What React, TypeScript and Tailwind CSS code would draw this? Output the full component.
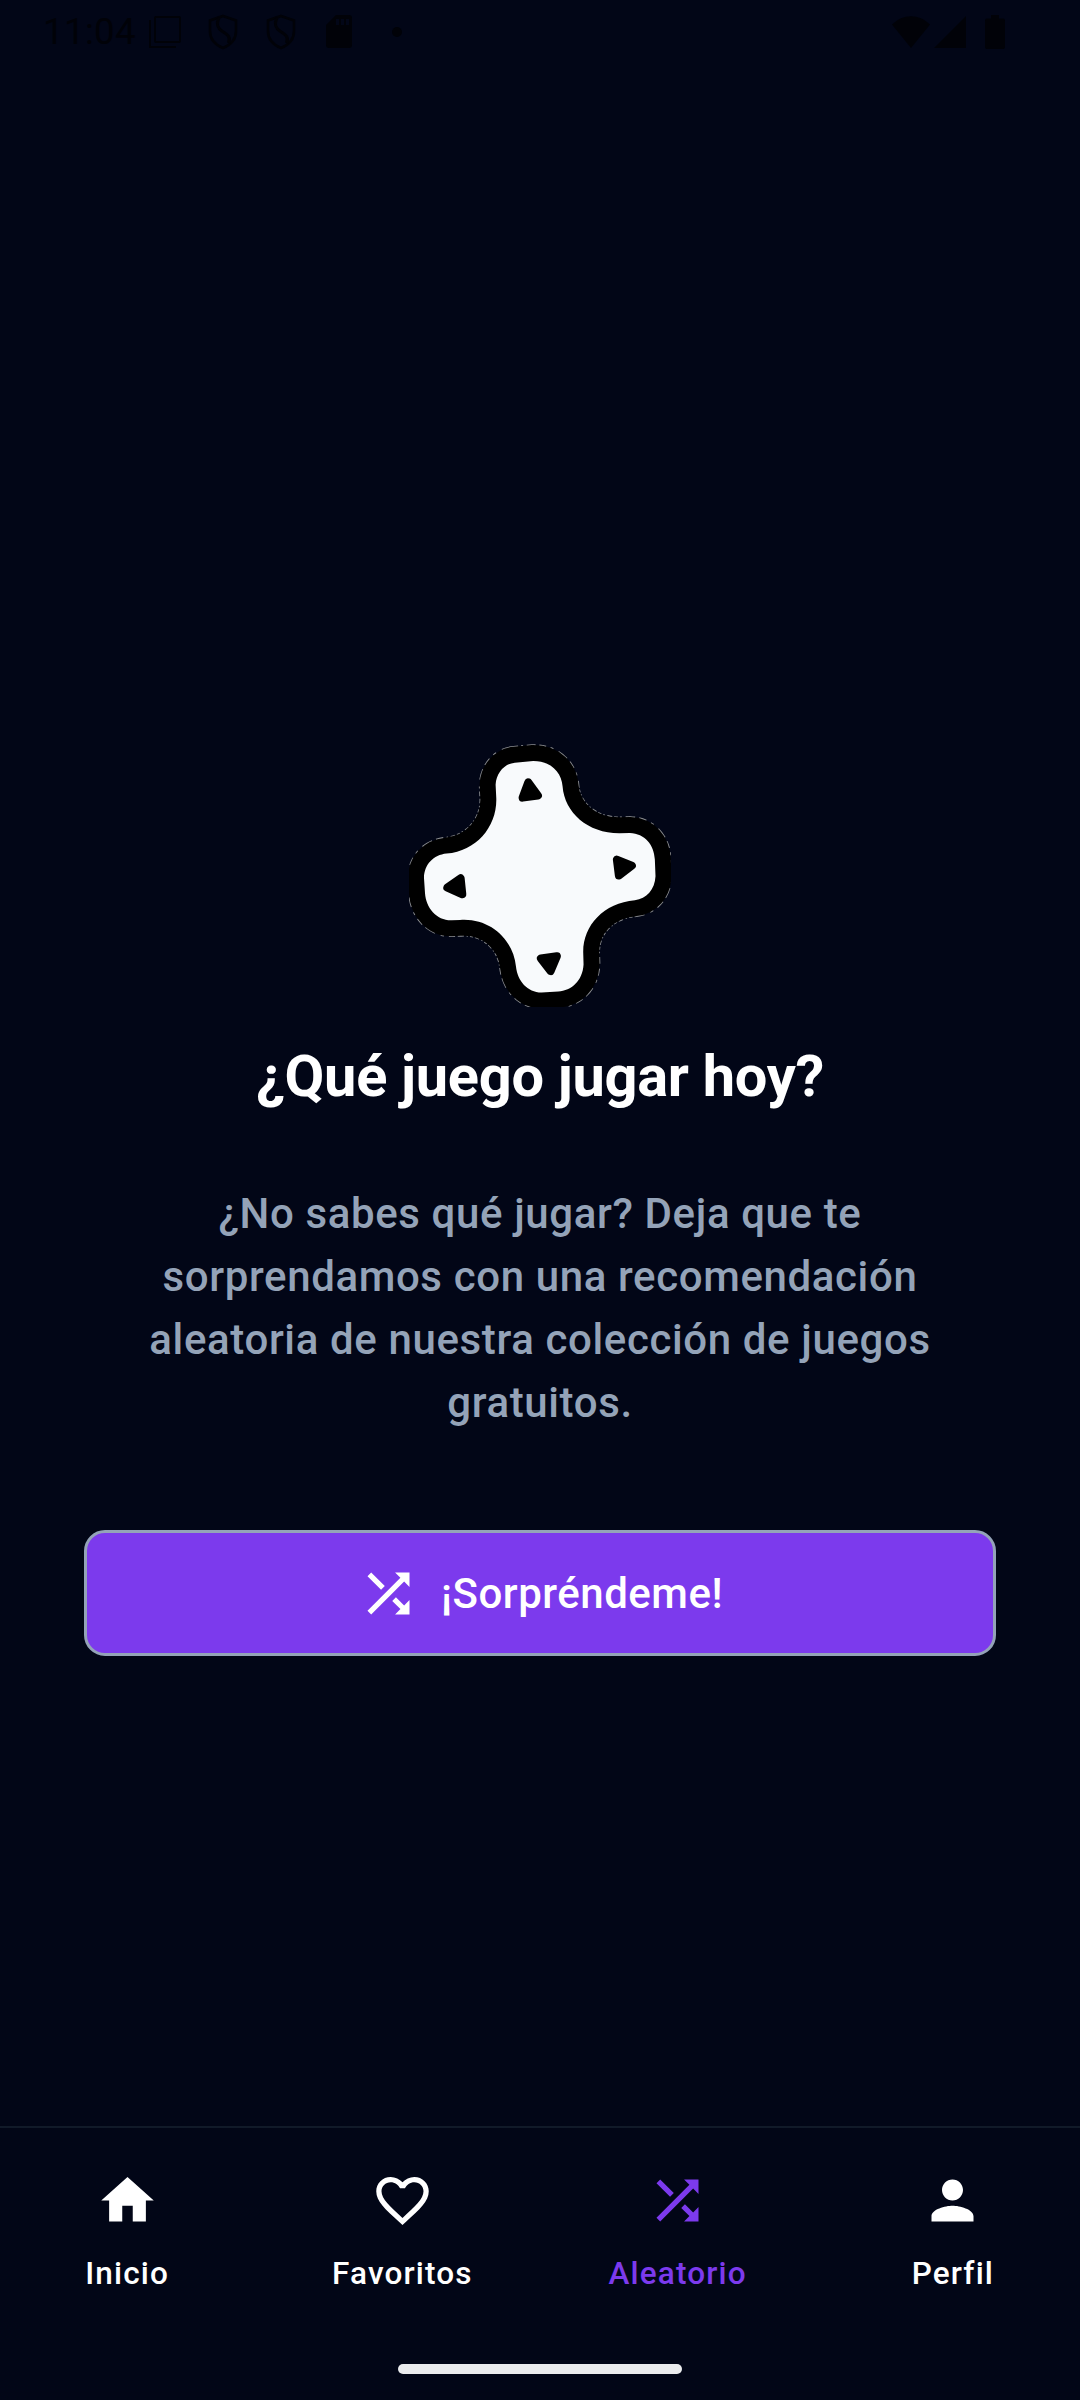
import type { ReactNode } from "react";

const HOME = "M10 20v-6h4v6h5v-8h3L12 3 2 12h3v8z";
const HEART =
  "M16.5 3c-1.74 0-3.41.81-4.5 2.09C10.91 3.81 9.24 3 7.5 3 4.42 3 2 5.42 2 8.5c0 3.78 3.4 6.86 8.55 11.54L12 21.35l1.45-1.32C18.6 15.36 22 12.28 22 8.5 22 5.42 19.58 3 16.5 3zm-4.4 15.55l-.1.1-.1-.1C7.14 14.24 4 11.39 4 8.5 4 6.5 5.5 5 7.5 5c1.54 0 3.04.99 3.57 2.36h1.87C13.46 5.99 14.96 5 16.5 5c2 0 3.5 1.5 3.5 3.5 0 2.89-3.14 5.74-7.9 10.05z";
const SHUFFLE =
  "M10.59 9.17L5.41 4 4 5.41l5.17 5.17 1.42-1.41zM14.5 4l2.04 2.04L4 18.59 5.41 20 17.96 7.46 20 9.5V4h-5.5zm.33 9.41l-1.41 1.41 3.13 3.13L14.5 20H20v-5.5l-2.04 2.04-3.13-3.13z";
const PERSON =
  "M12 12c2.21 0 4-1.79 4-4s-1.79-4-4-4-4 1.79-4 4 1.79 4 4 4zm0 2c-2.67 0-8 1.34-8 4v2h16v-2c0-2.66-5.33-4-8-4z";

const PAD =
  "M375 99 L430 94 C485 94 515 130 518 170 C524 250 595 312 690 311 L720 310 C765 312 793 345 795 390 L797 440 C795 480 770 508 735 512 C640 520 578 590 580 670 L581 705 C578 755 545 783 505 786 L455 789 C412 788 383 755 378 710 C370 630 300 564 210 571 L185 572 C140 573 108 535 105 490 L102 445 C103 405 130 376 170 372 C260 364 322 290 319 205 L317 165 C319 130 343 102 375 99 Z";

function Icon({ d }: { d: string }) {
  return (
    <svg viewBox="0 0 24 24" className="size-[63px] shrink-0 fill-current">
      <path d={d} />
    </svg>
  );
}

function Shield() {
  return (
    <svg viewBox="0 0 30 36" className="h-[36px] w-[30px]" fill="none" stroke="currentColor" strokeWidth="2.6">
      <path d="M15 2 L28 6.5 V17 C28 25 22.5 31 15 34 C7.5 31 2 25 2 17 V6.5 Z" />
      <path d="M11 3.5 C7.500 11 10 14.500 14.5 17.500 C20 21 23 23 20.500 29" strokeWidth="3.2" />
    </svg>
  );
}

function StatusBar() {
  return (
    <header className="flex h-[63px] items-center text-[#010208]">
      <span className="ml-[43px] w-[93px] whitespace-nowrap text-[36.75px] leading-[42px] tracking-[0.3px]">11:04</span>
      <svg viewBox="0 0 32 34" className="ml-[13px] h-[34px] w-[32px]" fill="none" stroke="currentColor" strokeWidth="2">
        <rect x="6" y="2" width="25" height="25" rx="1" />
        <path d="M1 5V32H27" />
      </svg>
      <div className="ml-[27px]"><Shield /></div>
      <div className="ml-[28px]"><Shield /></div>
      <svg viewBox="0 0 26 33" className="ml-[30px] h-[33px] w-[26px] fill-current">
        <path fillRule="evenodd" d="M10 0H23a3 3 0 0 1 3 3V30a3 3 0 0 1-3 3H3a3 3 0 0 1-3-3V10ZM10 4v6h3V4ZM15 4v6h3V4ZM20 4v6h3V4Z" />
      </svg>
      <span className="ml-[40px] size-[10px] rounded-full bg-current" />
      <svg viewBox="0 0 38 32" className="ml-auto h-[32px] w-[38px] fill-current">
        <path d="M0 8.5C11-2.6 27-2.6 38 8.5L19 32Z" />
      </svg>
      <svg viewBox="0 0 32 32" className="ml-[4px] h-[32px] w-[32px] fill-current">
        <path d="M32 0V32H0Z" />
      </svg>
      <svg viewBox="0 0 20 34" className="mr-[75px] ml-[19px] h-[34px] w-[20px] fill-current">
        <path d="M6 0H14V3.5H18a2 2 0 0 1 2 2V32a2 2 0 0 1-2 2H2a2 2 0 0 1-2-2V5.500a2 2 0 0 1 2-2H6Z" />
      </svg>
    </header>
  );
}

function GamePad() {
  return (
    <svg viewBox="57 43 788 788" className="size-[262.5px]">
      <g strokeLinejoin="round">
        <path d={PAD} fill="none" stroke="#8b8d91" strokeWidth="101" strokeDasharray="14 9 6 11 20 8" />
        <path d={PAD} fill="#f8fafc" stroke="#000" strokeWidth="96" />
        <path d={PAD} fill="#f8fafc" />
      </g>
      <g fill="#000" stroke="#000" strokeWidth="24" strokeLinejoin="round">
        <path d="M415 158L444 198L398 204Z" />
        <path d="M726 408L681 390L687 438Z" />
        <path d="M172 474L212 446L217 494Z" />
        <path d="M482 725L453 687L501 680Z" />
      </g>
    </svg>
  );
}

function Tab({ icon, label, active }: { icon: ReactNode; label: string; active?: boolean }) {
  return (
    <button className={active ? "flex flex-1 flex-col items-center text-[#7c3aed]" : "flex flex-1 flex-col items-center text-white"}>
      {icon}
      <span className="mt-[21px] text-[31.5px] leading-[42px] font-medium tracking-[1.15px]">{label}</span>
    </button>
  );
}

export default function App() {
  return (
    <div className="flex h-[2400px] w-[1080px] flex-col overflow-hidden bg-[#020617] font-['Roboto',sans-serif]">
      <StatusBar />
      <main className="flex flex-1 flex-col items-center px-[84px] pt-[681px]">
        <GamePad />
        <h1 className="mt-[32.5px] text-[57.75px] leading-[74px] font-bold tracking-[-0.3px] whitespace-nowrap text-white">¿Qué juego jugar hoy?</h1>
        <p className="mt-[69px] text-center text-[42px] leading-[63px] font-medium tracking-[0.62px] text-[#94a3b8]">
          ¿No sabes qué jugar? Deja que te
          <br />
          sorprendamos con una recomendación
          <br />
          aleatoria de nuestra colección de juegos
          <br />
          gratuitos.
        </p>
        <button className="mt-[96px] flex h-[126px] w-full items-center justify-center gap-[21px] rounded-[21px] border-[3px] border-[#94a3b8] bg-[#7c3aed] text-[42px] leading-[63px] font-medium tracking-[0.5px] text-white">
          <Icon d={SHUFFLE} />
          <span>¡Sorpréndeme!</span>
        </button>
      </main>
      <nav className="flex h-[274px] flex-col items-center border-t-2 border-[#111a29]">
        <div className="flex w-full gap-[21px] pt-[41px]">
          <Tab icon={<Icon d={HOME} />} label="Inicio" />
          <Tab icon={<Icon d={HEART} />} label="Favoritos" />
          <Tab icon={<Icon d={SHUFFLE} />} label="Aleatorio" active />
          <Tab icon={<Icon d={PERSON} />} label="Perfil" />
        </div>
        <div className="mt-auto mb-[26px] h-[10px] w-[284px] rounded-full bg-[#ebecee]" />
      </nav>
    </div>
  );
}
